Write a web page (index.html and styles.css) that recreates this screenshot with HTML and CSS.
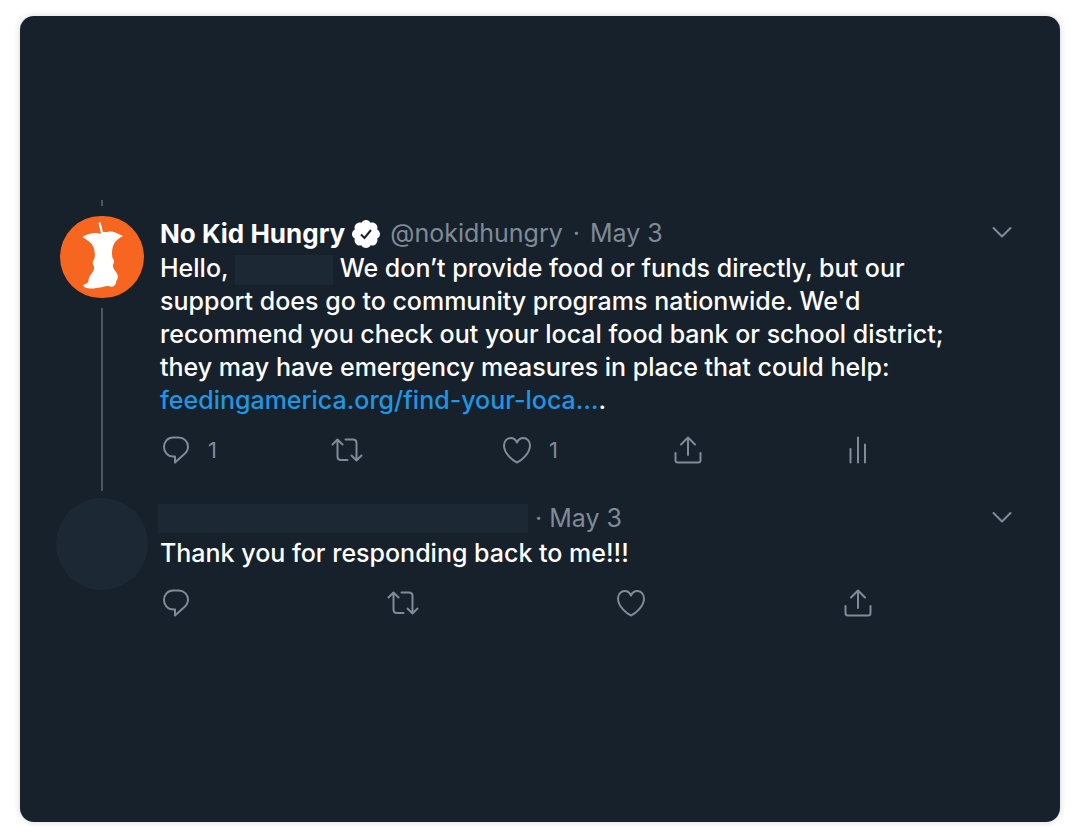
FILE: index.html
```
<!DOCTYPE html>
<html lang="en">
<head>
    <meta charset="UTF-8">
    <meta name="viewport" content="width=device-width, initial-scale=1">
    <link rel="stylesheet" href="styles.css">
    <title>No Kid Hungry thread</title>
</head>
<body>
    <!-- shared icons -->
    <svg class="sprite" aria-hidden="true">
        <symbol id="icon-reply" viewBox="0 0 28 28">
            <path d="M11 1.500h5.500c5.500 0 9.500 4 9.500 9 0 4-2 6.500-5 8.700L13 26.500V20.500h-1.500C5.500 20.500 2 16 2 11s3.500-9.500 9-9.500z"/>
        </symbol>
        <symbol id="icon-retweet" viewBox="0 0 34 28">
            <path d="M2.500 8.500l5-5 5 5M7.500 4v16.500c0 2.200 1.300 3.500 3.500 3.500h6.500M15.500 3.500h7.500c2.200 0 3.500 1.300 3.500 3.500v17M21.500 19.500l5 5 5-5"/>
        </symbol>
        <symbol id="icon-like" viewBox="0 0 28 28">
            <path d="M14 26.500C10 25 1 17.500 1 9.500 1 5 4 2 7.700 2c3 0 5.200 2 6.300 4.500C15.100 4 17.300 2 20.300 2 24 2 27 5 27 9.500c0 8-9 15.500-13 17z"/>
        </symbol>
        <symbol id="icon-share" viewBox="0 0 28 28">
            <path d="M14 19V2M7 8.500L14 1.500l7 7M1.500 17v7c0 1.500 1 2.500 2.500 2.500h20c1.500 0 2.500-1 2.500-2.500v-7"/>
        </symbol>
        <symbol id="icon-stats" viewBox="0 0 28 28">
            <path d="M6.500 13v13.500M14 1.500v25M21 8.500v18"/>
        </symbol>
        <symbol id="icon-more" viewBox="0 0 28 28">
            <path d="M5.500 8l8.500 8.500L22.500 8"/>
        </symbol>
    </svg>

    <main class="card">
        <article class="tweet">
            <div class="rail">
                <span class="line-stub"></span>
                <svg class="avatar" viewBox="0 0 84 82" role="img" aria-label="No Kid Hungry">
                    <rect class="avatar-bg" width="84" height="82" rx="41"/>
                    <path class="avatar-core" d="M38.500 7l2-1 2.500 10c5 .5 6-1 9-.5 4 .8 7 3 11 4.500-5 3-8 5-9 8-2 4-2.500 9-1.500 14 2 2.500 2 4 .5 7-.5 5 5 7 5 12 0 2-2 3-2 6-1 3-3 4.500-6 3.500-4-1.500-7 1-10 1-3 0-6 1.500-10 1-3 0-6-1-7-3 1-2 5-1 5.500-5 0-3 1.500-5 4.500-9 1-2 1-3 1-5-2-3-1.500-5 .5-8 1-5 0-10-2.500-14-2.500-3.500-6-5-9.500-7.500 4-2.500 9-4 13-4 2 0 4 1 5.500.5z"/>
                </svg>
                <span class="line"></span>
            </div>
            <div class="content">
                <header class="meta">
                    <strong class="name">No Kid Hungry</strong>
                    <svg class="verified" viewBox="0 0 28 28" role="img" aria-label="Verified account">
                        <path d="M14 0c2 0 3.700 1.100 4.600 2.800 1.900-.6 3.900-.2 5.300 1.300 1.500 1.400 1.900 3.400 1.300 5.300C26.900 10.300 28 12 28 14s-1.100 3.700-2.800 4.600c.6 1.900.2 3.900-1.300 5.300-1.400 1.500-3.400 1.900-5.300 1.300C17.700 26.900 16 28 14 28s-3.700-1.100-4.600-2.800c-1.900.6-3.900.2-5.300-1.300-1.500-1.400-1.900-3.400-1.300-5.300C1.100 17.700 0 16 0 14s1.100-3.700 2.800-4.600c-.6-1.900-.2-3.900 1.300-5.300 1.400-1.500 3.400-1.900 5.300-1.300C10.300 1.100 12 0 14 0z"/>
                        <path class="tick" d="M9 14.500l3.500 3.500 6.500-8"/>
                    </svg>
                    <span class="info">@nokidhungry</span>
                    <span class="info">·</span>
                    <span class="info">May 3</span>
                    <button type="button" class="more" aria-label="More">
                        <svg class="icon"><use href="#icon-more"/></svg>
                    </button>
                </header>
                <p class="text">Hello, <span class="redacted"></span> We don’t provide food or funds directly, but our support does go to community programs nationwide. We'd recommend you check out your local food bank or school district; they may have emergency measures in place that could help: <span class="link"><a href="#">feedingamerica.org/find-your-loca…</a>.</span></p>
                <div class="actions">
                    <button type="button" aria-label="Reply"><svg class="icon"><use href="#icon-reply"/></svg><span>1</span></button>
                    <button type="button" aria-label="Retweet"><svg class="icon wide"><use href="#icon-retweet"/></svg></button>
                    <button type="button" aria-label="Like"><svg class="icon"><use href="#icon-like"/></svg><span>1</span></button>
                    <button type="button" aria-label="Share"><svg class="icon"><use href="#icon-share"/></svg></button>
                    <button type="button" aria-label="Analytics"><svg class="icon"><use href="#icon-stats"/></svg></button>
                </div>
            </div>
        </article>

        <article class="tweet">
            <div class="rail">
                <span class="avatar-hidden"></span>
            </div>
            <div class="content">
                <header class="meta">
                    <span class="name-hidden"></span>
                    <span class="info">· May 3</span>
                    <button type="button" class="more" aria-label="More">
                        <svg class="icon"><use href="#icon-more"/></svg>
                    </button>
                </header>
                <p class="text">Thank you for responding back to me!!!</p>
                <div class="actions">
                    <button type="button" aria-label="Reply"><svg class="icon"><use href="#icon-reply"/></svg></button>
                    <button type="button" aria-label="Retweet"><svg class="icon wide"><use href="#icon-retweet"/></svg></button>
                    <button type="button" aria-label="Like"><svg class="icon"><use href="#icon-like"/></svg></button>
                    <button type="button" aria-label="Share"><svg class="icon"><use href="#icon-share"/></svg></button>
                </div>
            </div>
        </article>
    </main>
</body>
</html>
```
FILE: styles.css
```
* {
  box-sizing: border-box;
}

body {
  margin: 0;
  padding: 16px 20px 15px;
  min-height: 100vh;
  display: flex;
  background: #fff;
  font-family: Inter, "Liberation Sans", sans-serif;
  font-size: 25px;
  line-height: 33px;
  color: #fff;
}

.sprite {
  display: none;
}

.card {
  flex: 1;
  min-width: 0;
  padding: 184px 44px 40px 36px;
  border-radius: 14px;
  background: #17212c;
  box-shadow: 0 0 6px rgba(23, 33, 44, 0.2);
}

.tweet {
  display: flex;
  gap: 12px;
}

.rail {
  width: 92px;
  flex-shrink: 0;
  display: flex;
  flex-direction: column;
  align-items: center;
}

.line-stub,
.line {
  width: 2px;
  background: #4a5662;
}

.line-stub {
  height: 6px;
}

.line {
  flex: 1;
}

.avatar {
  width: 84px;
  height: 82px;
  margin: 10px 0;
}

.avatar-bg {
  fill: #f66621;
}

.avatar-core {
  fill: #fff;
}

.avatar-hidden {
  width: 92px;
  height: 92px;
  margin-top: 7px;
  border-radius: 50%;
  background: #1c2833;
}

.content {
  flex: 1;
  min-width: 0;
  padding: 9px 0 26px;
}

.tweet:first-child .content {
  padding-top: 15px;
}

.meta {
  display: flex;
  align-items: center;
  height: 37px;
}

.name {
  font-size: 26px;
  font-weight: 700;
}

.verified {
  width: 28px;
  height: 28px;
  margin: 0 10px 0 7px;
  fill: #fff;
}

.tick {
  fill: none;
  stroke: #17212c;
  stroke-width: 2;
}

.name-hidden {
  width: 370px;
  height: 29px;
  margin: 0 7px 0 -2px;
  background: #1c2833;
}

.info {
  color: #7f8b97;
}

.info + .info {
  margin-left: 10px;
}

button {
  padding: 0;
  border: none;
  background: none;
  color: #7f8b97;
  font: inherit;
  cursor: pointer;
}

.more {
  display: flex;
  margin-left: auto;
}

.text {
  margin: 0;
  max-width: 820px;
  font-weight: 500;
}

.redacted {
  display: inline-block;
  width: 98px;
  height: 30px;
  vertical-align: middle;
  background: #1c2833;
}

.link {
  white-space: nowrap;
}

a {
  color: #1f96e4;
  text-decoration: none;
}

.actions {
  display: flex;
  justify-content: space-between;
  max-width: 712px;
  margin-top: 18px;
  padding-left: 2px;
}

/* counts hang outside so the icons stay evenly spread */
.actions button {
  display: flex;
  align-items: center;
  justify-content: flex-start;
  width: 28px;
  height: 30px;
  font-size: 22px;
}

.actions span {
  margin-left: 18px;
}

.icon {
  width: 28px;
  height: 28px;
  flex-shrink: 0;
  fill: none;
  stroke: #7f8b97;
  stroke-width: 2;
  stroke-linecap: round;
  stroke-linejoin: round;
}

.icon.wide {
  width: 34px;
  margin-left: -3px;
}
```
